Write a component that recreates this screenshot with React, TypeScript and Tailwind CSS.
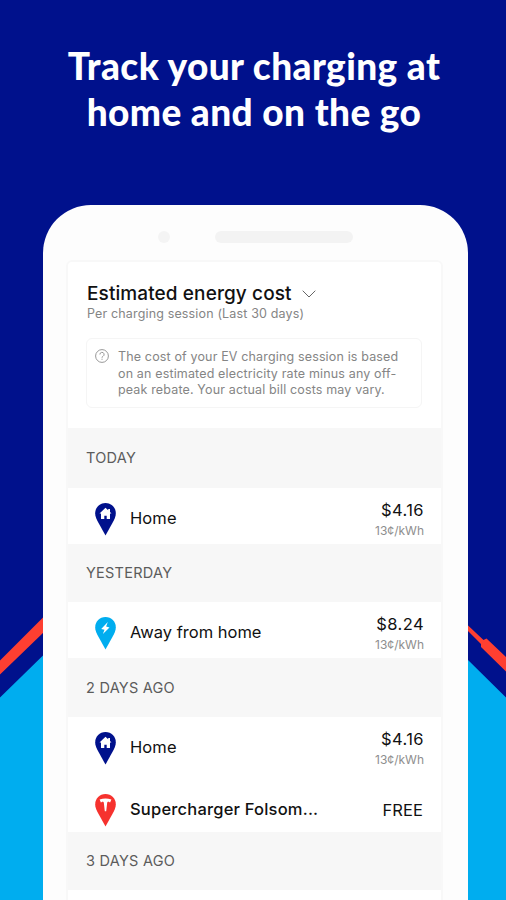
import type { ReactNode } from "react";

type PinKind = "home" | "away" | "tesla";

type Session = {
  kind: PinKind;
  label: string;
  labelClass: string;
  price: string;
  rate?: string;
};

type Day = {
  title: string;
  headClass: string;
  sessions: Session[];
};

const days: Day[] = [
  {
    title: "Today",
    headClass: "h-[60px]",
    sessions: [
      {
        kind: "home",
        label: "Home",
        labelClass: "tracking-[0.1px]",
        price: "$4.16",
        rate: "13¢/kWh",
      },
    ],
  },
  {
    title: "Yesterday",
    headClass: "h-[58px]",
    sessions: [
      {
        kind: "away",
        label: "Away from home",
        labelClass: "tracking-[0px]",
        price: "$8.24",
        rate: "13¢/kWh",
      },
    ],
  },
  {
    title: "2 days ago",
    headClass: "h-[59px]",
    sessions: [
      {
        kind: "home",
        label: "Home",
        labelClass: "tracking-[0.1px]",
        price: "$4.16",
        rate: "13¢/kWh",
      },
      {
        kind: "tesla",
        label: "Supercharger Folsom...",
        labelClass: "tracking-[0.2px] font-medium",
        price: "FREE",
      },
    ],
  },
  {
    title: "3 days ago",
    headClass: "h-[58px]",
    sessions: [],
  },
];

const pinColors: Record<PinKind, string> = {
  home: "#00118c",
  away: "#00adef",
  tesla: "#f6322e",
};

const pinGlyphs: Record<PinKind, ReactNode> = {
  home: (
    <path d="M10.500 4.800 4.500 10.500h1.500v5.500h3.300v-3.200h2.400v3.200H15v-5.500h1.500l-1.500-1.500V6h-1.800v1.300z" />
  ),
  away: <path d="M12.800 5 6.200 11.900l3.300.9-1.600 4.300 6.600-6.700-3.400-1z" />,
  tesla: (
    <path d="M4.600 5.400q5.900-1.900 11.800 0l-1.300 3-2-.9-.9 1.100-1 8.600h-1.400l-1-8.600-.9-1.100-2 .9z" />
  ),
};

const Pin = ({ kind }: { kind: PinKind }) => (
  <svg width="21" height="33" viewBox="0 0 21 33" className="shrink-0">
    <path
      fill={pinColors[kind]}
      d="M10.500 0C4.600 0 .2 4.500.2 10.200c0 2.600.9 4.800 2 7.200l8.300 15.200 8.300-15.200c1.100-2.400 2-4.600 2-7.200C20.800 4.500 16.400 0 10.500 0z"
    />
    <g fill="#fff">{pinGlyphs[kind]}</g>
  </svg>
);

const SessionRow = ({ session }: { session: Session }) => (
  <li className="flex h-14 items-start justify-between pl-[27px] pr-[17px] last:not-first:h-[53px]">
    <div className="flex items-center gap-[14px] pt-[15px]">
      <Pin kind={session.kind} />
      <span
        className={`-mt-[3px] text-[16.5px] leading-5 ${session.labelClass}`}
      >
        {session.label}
      </span>
    </div>
    {session.rate ? (
      <div className="pt-3 text-right">
        <p className="text-[16.5px] leading-5 tracking-[0.4px]">
          {session.price}
        </p>
        <p className="pt-[3px] text-[12px] leading-4 text-[#8e8e8e]">
          {session.rate}
        </p>
      </div>
    ) : (
      <p className="pt-[21px] pr-px text-[16.5px] leading-5 tracking-[0.1px]">
        {session.price}
      </p>
    )}
  </li>
);

const Backdrop = () => (
  <svg
    width="506"
    height="900"
    viewBox="0 0 506 900"
    className="absolute inset-0"
  >
    <path fill="#00adef" d="M0 697.500 43.500 655v245H0zM467 659l39 38.500V900h-39z" />
    <path
      fill="#fe3f31"
      d="M0 660.500 44 616.500v15.500L0 674.500zM467 624.500l16.500 15.500 3-1.500 19.500 18.500v14.500l-25-24.500v-3l-14-14z"
    />
  </svg>
);

const App = () => {
  return (
    <div className="relative h-[900px] w-[506px] overflow-hidden bg-[#00118c] font-['Inter',sans-serif]">
      <Backdrop />
      <div className="relative flex flex-col items-center">
        <h1 className="h-[205px] pt-[43px] pl-[2px] text-center font-['Lato',sans-serif] text-[37px] font-black leading-[46px] tracking-[0.4px] text-white">
          <span className="block whitespace-nowrap">
            Track your charging at
          </span>
          <span className="block whitespace-nowrap">home and on the go</span>
        </h1>
        <div className="ml-[5px] h-[760px] w-[425px] rounded-t-[48px] bg-[#fdfdfd] pl-[23px] pr-[25px]">
          <div className="flex h-[55px] items-center gap-[45px] pl-[92px] pt-2">
            <span className="size-3 rounded-full bg-[#f4f4f4]" />
            <span className="h-3 w-[138px] rounded-full bg-[#f3f3f3]" />
          </div>
          <main className="h-[705px] rounded-t-md border-2 border-[#f8f8f8] bg-white text-[#111]">
            <header className="h-[166px] px-[18px] pt-5">
              <div className="flex items-center gap-[10px]">
                <h2 className="pl-px text-[19px] font-medium leading-6 tracking-[0.1px]">
                  Estimated energy cost
                </h2>
                <svg width="14" height="8" viewBox="0 0 14 8" fill="none">
                  <path d="m.7.700 6.300 6.300L13.300.7" stroke="#666" />
                </svg>
              </div>
              <p className="pl-px text-[12.500px] leading-4 tracking-[0.15px] text-[#858585]">
                Per charging session (Last 30 days)
              </p>
              <div className="mt-4 flex h-[70px] w-[336px] gap-[9px] rounded-md border border-[#f5f5f5] pl-2 pt-[10px]">
                <svg
                  width="14"
                  height="14"
                  viewBox="0 0 14 14"
                  fill="none"
                  stroke="#8c8c8c"
                  strokeWidth="0.9"
                  className="shrink-0"
                >
                  <circle cx="7" cy="7" r="6.400" />
                  <path d="M4.900 5.500a2.100 2.100 0 1 1 3.100 1.800c-.7.400-1 .7-1 1.400M7 9.700v1.100" />
                </svg>
                <p className="whitespace-nowrap text-[12.500px] leading-[16.500px] tracking-[0.150px] text-[#858585]">
                  The cost of your EV charging session is based
                  <br />
                  on an estimated electricity rate minus any off-
                  <br />
                  peak rebate. Your actual bill costs may vary.
                </p>
              </div>
            </header>
            {days.map((day) => (
              <section key={day.title}>
                <h3
                  className={`flex items-center bg-[#f7f7f7] pl-[18px] text-[14.5px] uppercase tracking-[0.25px] text-[#5c5c5c] ${day.headClass}`}
                >
                  {day.title}
                </h3>
                <ul className="flex flex-col gap-[6px]">
                  {day.sessions.map((session) => (
                    <SessionRow key={session.label} session={session} />
                  ))}
                </ul>
              </section>
            ))}
          </main>
        </div>
      </div>
    </div>
  );
};

export default App;
